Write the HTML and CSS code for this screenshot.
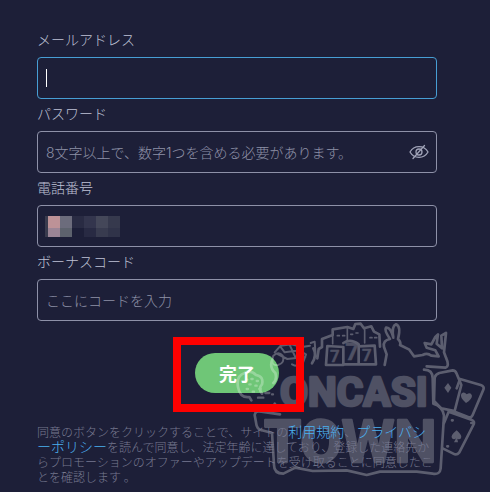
FILE: index.html
```html
<!DOCTYPE html>
<html lang="ja">
  <head>
    <meta charset="UTF-8" />
    <meta name="viewport" content="width=device-width, initial-scale=1.0" />
    <title>登録</title>
    <link rel="stylesheet" href="styles.css">
  </head>
  <body>
    <main class="signup">
      <form class="signup-form">
        <label for="email">メールアドレス</label>
        <div class="field">
          <input type="email" id="email" name="email" class="active" />
          <span class="caret"></span>
        </div>

        <label for="password">パスワード</label>
        <div class="field">
          <input type="password" id="password" name="password" placeholder="8文字以上で、数字1つを含める必要があります。" />
          <button type="button" class="eye-btn" aria-label="パスワードを表示">
            <svg width="20" height="16" viewBox="0 0 20 16" fill="none" stroke="currentColor" stroke-width="1.3" stroke-linecap="round">
              <path d="M1 8C3 4.500 6 2.700 10 2.700S17 4.500 19 8C17 11.500 14 13.300 10 13.300S3 11.500 1 8Z" />
              <circle cx="10" cy="8" r="3" />
              <path d="M15.500 1.500L4 14.500" />
            </svg>
          </button>
        </div>

        <label for="phone">電話番号</label>
        <div class="field">
          <input type="tel" id="phone" name="phone" />
          <svg class="mosaic" width="75" height="21" viewBox="0 0 75 21" shape-rendering="crispEdges">
            <path fill="#393b4e" d="M0 0h3v21H0z" />
            <path fill="#bd9297" d="M3 0h12v12H3z" />
            <path fill="#9b8596" d="M3 12h12v9H3z" />
            <path fill="#6c6c7c" d="M15 0h12v12H15z" />
            <path fill="#5d626d" d="M15 12h12v9H15z" />
            <path fill="#292b43" d="M27 0h12v12H27z" />
            <path fill="#33354d" d="M39 0h12v12H39z" />
            <path fill="#282a43" d="M39 12h12v9H39z" />
            <path fill="#444759" d="M51 0h12v12H51z" />
            <path fill="#383b4f" d="M51 12h12v9H51z" />
            <path fill="#36394d" d="M63 0h12v12H63z" />
            <path fill="#303349" d="M63 12h12v9H63z" />
          </svg>
        </div>

        <label for="bonus">ボーナスコード</label>
        <div class="field">
          <input type="text" id="bonus" name="bonus" placeholder="ここにコードを入力" />
        </div>

        <div class="submit-row">
          <div class="highlight">
            <button type="submit" class="submit-btn">完了</button>
          </div>
        </div>

        <p class="terms">同意のボタンをクリックすることで、サイトの<a href="#">利用規約</a>、<a href="#">プライバシーポリシー</a>を読んで同意し、法定年齢に達しており、登録した連絡先からプロモーションのオファーやアップデートを受け取ることに同意したことを確認します 。</p>
      </form>

      <!-- logo watermark -->
      <svg class="watermark" width="260" height="177" viewBox="0 0 780 531" fill="none" stroke="#fff" stroke-width="8" stroke-linejoin="round" stroke-linecap="round">
        <!-- skyline -->
        <path d="M246 145Q262 120 250 100M262 130L266 102L276 96V72L308 60V43L352 36L370 42L376 27L392 26L402 40L424 34L432 50L448 58L450 95" />
        <path d="M322 62h6M338 62h6M362 58h6M378 54h6M420 68h6M434 68h6M352 40V74M404 44V84M308 62V86" stroke-width="5" />
        <!-- slot reels -->
        <path d="M292 93L340 96V150H288ZM340 84Q362 70 386 88V148H340M386 94L434 92L438 148H386" />
        <!-- rabbit and lounging figure -->
        <path d="M464 150L470 118L462 96Q458 76 480 72Q462 46 468 38Q482 36 490 68Q484 34 498 28Q514 34 504 72Q514 82 510 90L538 104L552 124L578 120Q592 112 604 122L626 124L616 106L590 98L584 84L604 88L616 66L624 58L620 86L636 100L634 62L648 54L642 112L648 128Q660 154 646 158L590 154" />
        <!-- dice, bike and coins -->
        <path d="M134 112L152 92L184 88L216 96L240 92M140 116L172 132L226 126M152 96L164 112L210 106M180 92L196 126M242 84L254 80L256 110M130 122Q120 154 144 150Q166 144 158 122Q146 108 130 122M186 148Q208 160 220 138M202 104L228 118L218 146" stroke-width="6" />
        <!-- clown face -->
        <path d="M126 136Q118 158 136 174Q142 194 130 204M24 216Q18 182 44 174Q62 164 78 180Q102 184 96 208Q84 220 96 236M24 216Q30 250 58 246L64 256" />
        <path d="M48 194h4M64 192h4M80 198h4M58 208h4M76 212h4M50 222h4M88 222h4M68 230h4M106 234h12M126 238h3M84 248h16" stroke-width="7" />
        <!-- name plate -->
        <path d="M582 164Q608 164 608 190L610 266Q638 274 642 302L632 460Q630 480 608 476L560 470H450L410 480L350 466L248 468L196 458L160 476Q132 476 132 450L126 354L96 346Q80 344 78 322L74 300Q76 286 94 290L150 298" />
        <path d="M134 266Q148 292 170 278" />
        <!-- cards -->
        <path d="M614 188Q616 178 628 174L668 166Q676 166 680 176L694 210L674 288L634 280L612 258ZM690 192L752 210Q764 214 760 224L728 300Q724 310 714 306L674 290M656 290L724 314Q736 318 730 330L688 412Q680 422 670 416L638 400M656 290L642 324" />
        <path d="M688 198L680 220M724 324h2M652 394h2M666 316h2" />
        <g fill="#fff" stroke="none">
          <path d="M654 204L664 218L654 234L643 218Z" />
          <path d="M708 264Q688 246 694 236Q702 228 710 238Q722 230 726 242Q726 252 708 264Z" />
          <path d="M680 346Q660 362 666 370Q672 376 678 370L672 382H684L682 371Q692 376 694 366Q694 358 680 346Z" />
        </g>
        <g class="logo-text" fill="#fff">
          <text x="300" y="140" font-size="50" stroke-width="1">7</text>
          <text x="346" y="136" font-size="72" stroke-width="1">7</text>
          <text x="396" y="138" font-size="50" stroke-width="1">7</text>
          <text x="150" y="274" font-size="122">ONCASI</text>
          <text x="102" y="442" font-size="180" stroke-width="7">TOWN</text>
        </g>
      </svg>
    </main>
  </body>
</html>
```
FILE: styles.css
```css
* {
  box-sizing: border-box;
}
body {
  margin: 0;
  background-color: #1d1f38;
  color: #bfc2d6;
  font-family: "Noto Sans CJK JP", sans-serif;
  font-weight: 300;
}
.signup {
  position: relative;
  min-height: 100vh;
  padding: 25px 53px 0 37px;
}
.signup-form label {
  display: block;
  padding: 4px 0 8px;
  font-size: 14px;
  line-height: 20px;
}
.field {
  position: relative;
}
.field input {
  display: block;
  width: 100%;
  height: 42px;
  padding: 0 40px 0 8px;
  border: 1px solid #8e91a8;
  border-radius: 4px;
  outline: none;
  background-color: transparent;
  color: white;
  font-family: Inter, "Noto Sans CJK JP", sans-serif;
  font-size: 14px;
  font-weight: 300;
}
.field input::placeholder {
  color: #8e91a7;
}
.field input.active {
  border-color: #479ed4;
}
.caret {
  position: absolute;
  top: 12px;
  left: 9px;
  width: 1px;
  height: 18px;
  background-color: white;
}
.eye-btn {
  position: absolute;
  top: 13px;
  right: 8px;
  display: flex;
  padding: 0;
  border: none;
  background: none;
  color: #a0a3b8;
  cursor: pointer;
}
.mosaic {
  position: absolute;
  top: 11px;
  left: 8px;
}

/* submit */
.submit-row {
  display: flex;
  justify-content: center;
  margin: 32px 0 31px;
}
.highlight {
  position: relative;
}
.highlight::after {
  content: "";
  position: absolute;
  inset: -16px -25px -19px -22px;
  z-index: 2;
  border: 8px solid #fe0000;
  pointer-events: none;
}
.submit-btn {
  display: block;
  width: 84px;
  height: 40px;
  padding: 0;
  border: none;
  border-radius: 20px;
  background-color: #6fc677;
  color: white;
  font-family: "Noto Sans CJK JP", sans-serif;
  font-size: 18px;
  font-weight: 700;
  line-height: 38px;
  cursor: pointer;
}
.terms {
  position: relative;
  z-index: 2;
  margin: 0;
  color: #777990;
  font-size: 12px;
  line-height: 15px;
  line-break: anywhere;
}
.terms a {
  color: #4bb0f0;
  font-size: 14px;
  line-height: 1;
  text-decoration: none;
}

.watermark {
  position: absolute;
  right: 0;
  bottom: 0;
  z-index: 1;
  opacity: 0.28;
  pointer-events: none;
}
.logo-text {
  font-family: Roboto, sans-serif;
  font-weight: 700;
  opacity: 0.8;
}
```
